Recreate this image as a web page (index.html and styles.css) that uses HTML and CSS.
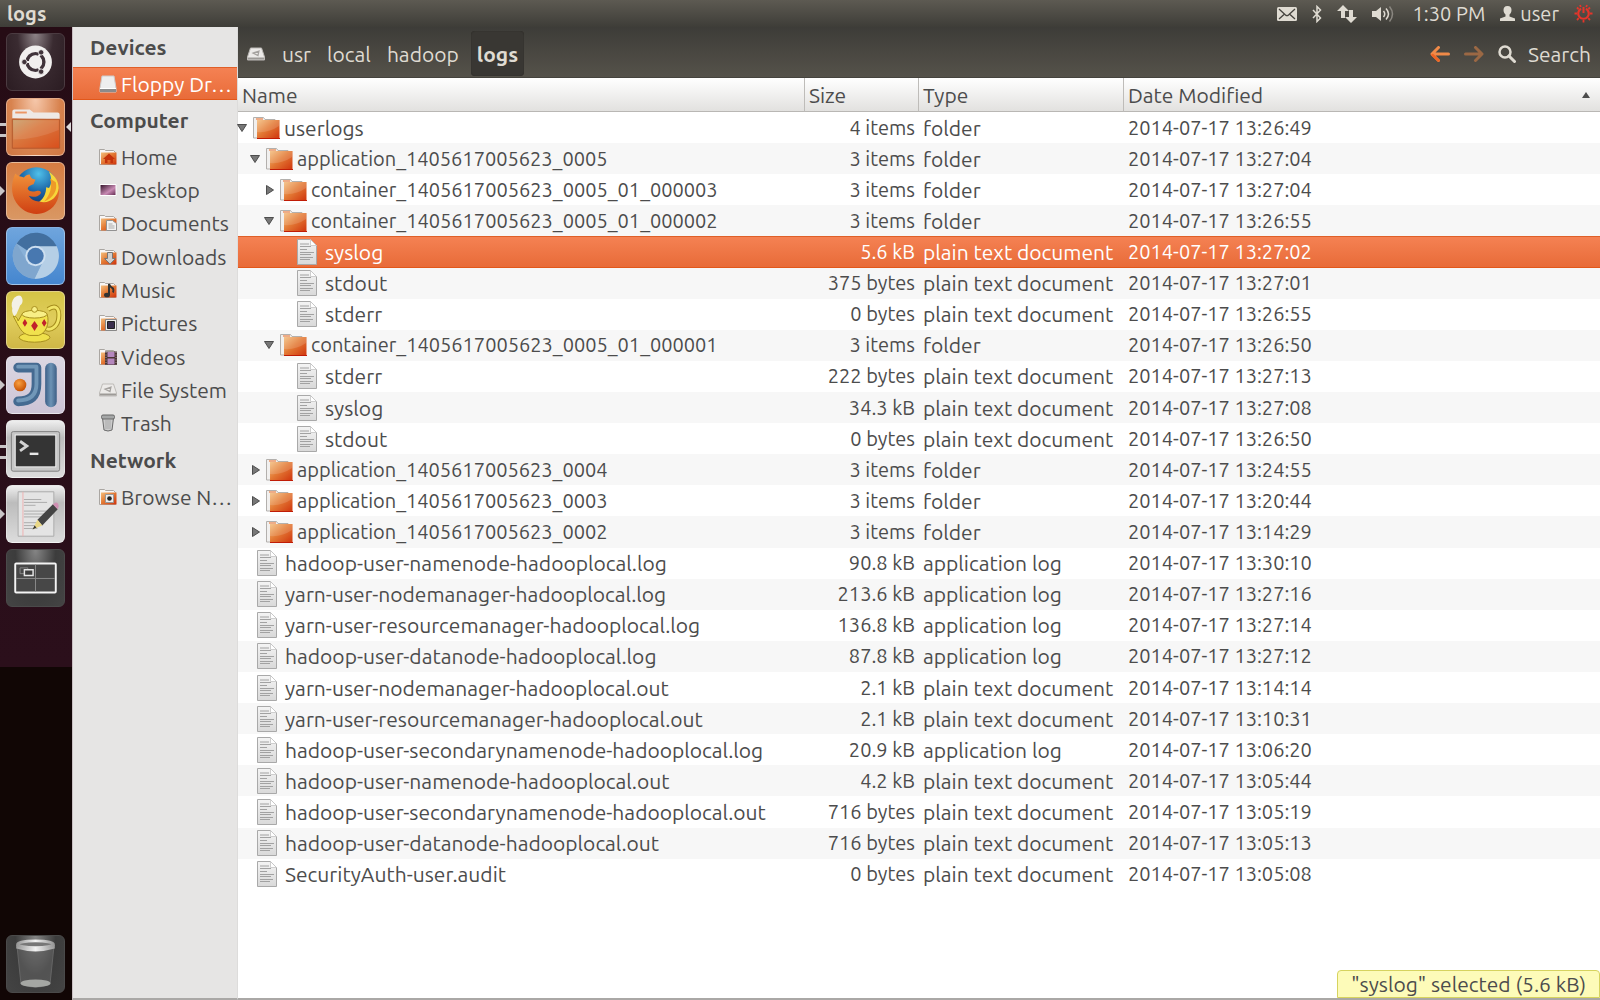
FILE: index.html
```html
<!DOCTYPE html>
<html lang="en">
<head>
<meta charset="utf-8">
<title>logs</title>
<link rel="stylesheet" href="styles.css">
</head>
<body>
<svg class="sprite" aria-hidden="true">
  <defs>
    <linearGradient id="g-folder" x1="0" y1="0" x2="1" y2="1"><stop offset="0" stop-color="#f3bd7c"/><stop offset=".45" stop-color="#e37a35"/><stop offset="1" stop-color="#cf330c"/></linearGradient>
    <linearGradient id="g-paper" x1="0" y1="0" x2="0" y2="1"><stop offset="0" stop-color="#f4f4f4"/><stop offset="1" stop-color="#d9d9d9"/></linearGradient>
    <linearGradient id="g-big" x1="0" y1="0" x2="1" y2="1"><stop offset="0" stop-color="#c9a06c"/><stop offset=".4" stop-color="#d9783f"/><stop offset="1" stop-color="#d94f1c"/></linearGradient>
    <radialGradient id="g-globe" cx=".55" cy=".15" r=".8"><stop offset="0" stop-color="#4fc0ea"/><stop offset=".5" stop-color="#1d67a8"/><stop offset="1" stop-color="#0d2a66"/></radialGradient>
    <linearGradient id="g-fox" x1="0" y1="0" x2="0" y2="1"><stop offset="0" stop-color="#f0913a"/><stop offset="1" stop-color="#cf3f12"/></linearGradient>
    <linearGradient id="g-blue" x1="0" y1="0" x2="1" y2="0"><stop offset="0" stop-color="#3d5f88"/><stop offset=".5" stop-color="#6d93b5"/><stop offset="1" stop-color="#3e5f86"/></linearGradient>
    <radialGradient id="g-ball" cx=".4" cy=".35" r=".7"><stop offset="0" stop-color="#f9a040"/><stop offset="1" stop-color="#c24c00"/></radialGradient>
    <linearGradient id="g-rim" x1="0" y1="0" x2="1" y2="0"><stop offset="0" stop-color="#999"/><stop offset=".5" stop-color="#f2f2f2"/><stop offset="1" stop-color="#999"/></linearGradient>
    <linearGradient id="g-desk" x1="0" y1="0" x2="1" y2="1"><stop offset="0" stop-color="#2c0d22"/><stop offset=".6" stop-color="#c98bb4"/><stop offset="1" stop-color="#5a2348"/></linearGradient>
  </defs>
  <symbol id="folder" viewBox="0 0 27 24">
    <path d="M.5 22V1.500h10l1.500 2h10l1 2V22z" fill="#f1f0ef" stroke="#b3b0ad"/>
    <path d="M3 3h7" stroke="#ec9664" stroke-width="1.500"/>
    <path d="M4 4h22.500v19H4z" fill="url(#g-folder)"/>
    <path d="M4 4h22v6Q16 17 4 16z" fill="#fff" opacity=".14"/>
    <path d="M4 22.500h23" stroke="#c01c06"/>
  </symbol>
  <symbol id="file" viewBox="0 0 20 26">
    <path d="M.5.5h13l6 6v19H.5z" fill="url(#g-paper)" stroke="#a9a9a9"/>
    <path d="M13.500.5v6h6z" fill="#fff" stroke="#c4c4c4" stroke-width=".8"/>
    <path d="M3 5h9M3 7.500h11M3 10.500h7M3 13.500h14M3 15.500h11M3 18.500h13M3 20.500h10" stroke="#a2a2a2"/>
  </symbol>
  <symbol id="down" viewBox="0 0 10 8"><path d="M.5.5h9L5 7.500z" fill="#777" stroke="#4d4d4d"/></symbol>
  <symbol id="right" viewBox="0 0 8 10"><path d="M.5.5v9L7.500 5z" fill="#777" stroke="#4d4d4d"/></symbol>
  <symbol id="mini-folder" viewBox="0 0 18 16">
    <path d="M.5 15.500V.5h5l1 1h8l2 2v12z" fill="#f8f6f5" stroke="#aaa6a2"/>
    <path d="M2 3.500h15.500v12H2z" fill="url(#g-folder)"/>
  </symbol>
  <symbol id="drive" viewBox="0 0 18 14">
    <path d="M3.500 1h11l3 9v3H.5v-3z" fill="#eceae8" stroke="#bdbab7"/>
    <path d="M1 11.500h16" stroke="#9d9a97" stroke-width="2"/>
    <path d="M12 4 6 6l5 2.500zM8 5.500h4" fill="none" stroke="#a5a29f" stroke-width="1.200"/>
  </symbol>
</svg>

<header class="panel">
  <h1 class="panel-title">logs</h1>
  <div class="indicators">
    <button class="plain" aria-label="Messages"><svg width="20" height="14" viewBox="0 0 20 14"><rect width="20" height="14" rx="1.500" fill="#dfdbd2"/><path d="m2 2 6.500 6q1.500 1.300 3 0L18 2M2 12l5-4.500M18 12l-5-4.500" fill="none" stroke="#45433e" stroke-width="1.300"/></svg></button>
    <button class="plain" aria-label="Bluetooth"><svg width="10" height="18" viewBox="0 0 10 18"><path d="m1 5 7.500 8L5 16.500v-15L8.500 5 1 13" fill="none" stroke="#dfdbd2" stroke-width="1.500"/></svg></button>
    <button class="plain" aria-label="Network"><svg width="20" height="18" viewBox="0 0 20 18"><path d="m6 0 6 6H8v7H4V6H0zM14 18l6-6h-4V5h-4v7H8z" fill="#dfdbd2"/></svg></button>
    <button class="plain" aria-label="Volume"><svg width="22" height="18" viewBox="0 0 22 18"><path d="M0 6h4l5-4v14l-5-4H0z" fill="#dfdbd2"/><path d="M11.500 6q2.500 3 0 6M14 3.500q5 5.500 0 11" fill="none" stroke="#dfdbd2" stroke-width="1.500"/><path d="M17.500 1.500q6 7.500 0 15" fill="none" stroke="#8a8780" stroke-width="1.500"/></svg></button>
    <button class="plain clock">1:30 PM</button>
    <button class="plain account"><svg width="15" height="15" viewBox="0 0 15 15"><path d="M7.500 0c3 0 4 2 4 4s-1 3.500-2 4.500v2l5.500 2V15H0v-2.500l5.500-2v-2c-1-1-2-2.500-2-4.500s1-4 4-4z" fill="#dfdbd2"/></svg>user</button>
    <button class="plain" aria-label="Session"><svg width="19" height="19" viewBox="0 0 19 19" fill="none" stroke="#e5352a"><path d="M7 4.800a5.300 5.300 0 1 0 5 0" stroke-width="2.200"/><path d="M9.500 3v6" stroke-width="2"/><path d="m3 3.500 1.500 1.500M16 3.500 14.500 5M.5 9.500H3M16 9.500h2.500M3 16l1.800-1.800M16 16l-1.800-1.800M9.500 16v2.500M6 1l.8 2M13 1l-.8 2" stroke-width="1.800"/></svg></button>
  </div>
</header>

<div class="desktop">
  <nav class="launcher" aria-label="Launcher">
    <div class="apps">
      <button class="app dash" aria-label="Dash"><svg viewBox="0 0 58 58"><circle cx="29" cy="29" r="17" fill="#f1efee"/><circle cx="29" cy="29" r="8.700" fill="none" stroke="#40333a" stroke-width="3.500"/><path d="m29 29-13 0M29 29l6.500-11.300M29 29l6.500 11.300" stroke="#f1efee" stroke-width="2"/><circle cx="29" cy="29" r="6.700" fill="#f1efee"/><g fill="#40333a" stroke="#f1efee" stroke-width=".8"><circle cx="17.500" cy="29" r="2.800"/><circle cx="34.800" cy="19" r="2.800"/><circle cx="34.800" cy="39" r="2.800"/></g></svg></button>
      <button class="app files twice current" aria-label="Files"><svg viewBox="0 0 58 58"><path d="M5 20v-7q0-2 2-2h16l4 3h25q2 0 2 2v5z" fill="#eee9e5"/><path d="M8 14h12" stroke="#ec9664" stroke-width="2"/><path d="M5 21h49v30H5z" fill="url(#g-big)" stroke="#b5582c"/><path d="M6 22h47v10Q30 42 6 42z" fill="#fff" opacity=".1"/></svg></button>
      <button class="app firefox running" aria-label="Firefox"><svg viewBox="0 0 58 58"><circle cx="30" cy="27" r="22.500" fill="url(#g-globe)"/><path d="M8 11c-4 9-5 21 1 30 7 11 21 15 32 9 10-5 14-16 12-27 0-3-1-5-3-7 0 11-4 20-13 23-6 2-12 0-15-5 5 2 9 1 12-2 2-2-1-4-4-3-4 1-7 1-9-2 0-3 3-4 6-5l2-5c-4 0-5-2-6-5-3 0-5 2-6 3-3-1-6-1-9-4z" fill="url(#g-fox)"/><path d="M43 9c3 6 3 12 0 17l-3-1c0 6-2 11-7 15 10 3 19-4 20-14 0-7-4-13-10-17z" fill="#f6d63a"/><path d="M44 16c3 8 0 17-6 24 10-4 14-12 12-20z" fill="#ee9a28"/></svg></button>
      <button class="app chromium" aria-label="Chromium"><svg viewBox="0 0 58 58"><circle cx="29" cy="29" r="23.500" fill="#89b1d8"/><path d="M29 29 9.500 16A23.500 23.500 0 0 1 51 19z" fill="#426f9f"/><path d="M29 19h22a23.500 23.500 0 0 1-23 33.500l9-18z" fill="#b5cfe6"/><path d="M9.500 16A23.500 23.500 0 0 0 28 52.500l8-17-16-1z" fill="#7fa6ce"/><circle cx="29" cy="29" r="10.500" fill="#cddff0"/><circle cx="29" cy="29" r="8.500" fill="#4878b0"/></svg></button>
      <button class="app teapot" aria-label="Teapot"><svg viewBox="0 0 58 58"><ellipse cx="28" cy="47" rx="16" ry="5" fill="#efe04b" stroke="#a58c1c"/><path d="M42 18c9-6 12 0 11 9s-8 13-13 11" fill="none" stroke="#a58c1c" stroke-width="5"/><path d="M42 18c9-6 12 0 11 9s-8 13-13 11" fill="none" stroke="#f1e466" stroke-width="3"/><path d="M6 25q4 0 5 5l4-7q13-6 26 0c3 9-1 20-9 22h-9C14 43 12 36 6 25z" fill="#f1e14d" stroke="#a58c1c"/><ellipse cx="28" cy="23" rx="13" ry="4" fill="#f8ef86" stroke="#a58c1c"/><circle cx="28" cy="18" r="3" fill="#f8ef86" stroke="#a58c1c"/><path d="m18 28 2.500 4-2.500 4-2.500-4zM28 30l3.500 5-3.500 5.500-3.500-5.500zM38 28l2.500 4-2.500 4-2.500-4z" fill="#c1212b"/><path d="M7 25q-3-4-2-8-2-6 2-11 6-5 8 0 2 5-2 8-1 3-2 5-1 4-4 6z" fill="#f3f1e6"/></svg></button>
      <button class="app idea running" aria-label="IntelliJ IDEA"><svg viewBox="0 0 58 58"><path d="M11 11h19v17c0 12-6 18-19 18" fill="none" stroke="#456a91" stroke-width="10" stroke-linecap="round" stroke-linejoin="round"/><path d="M11 10h19v18c0 11-6 17-19 17" fill="none" stroke="#7197b8" stroke-width="4" stroke-linecap="round" stroke-linejoin="round"/><rect x="39" y="6" width="12" height="46" rx="6" fill="url(#g-blue)"/><circle cx="13" cy="29" r="6.500" fill="url(#g-ball)"/></svg></button>
      <button class="app terminal twice" aria-label="Terminal"><svg viewBox="0 0 58 58"><rect x="4" y="11" width="50" height="41" rx="2" fill="#c6c6c6" stroke="#7e7e7e"/><rect x="8" y="14.500" width="42" height="33" fill="#343434" stroke="#f3f3f3"/><path d="m13 21 7 5-7 5" fill="none" stroke="#d3d3d3" stroke-width="3"/><path d="M23 34h9" stroke="#e8e8e8" stroke-width="2.500"/></svg></button>
      <button class="app gedit running" aria-label="Text Editor"><svg viewBox="0 0 58 58"><path d="M11 6h37v46H11z" fill="#e4e4e4" stroke="#aaa"/><path d="M16 6v46" stroke="#efb0b0"/><path d="M17 14h18M17 17h24M17 20h12M17 26h24M17 29h22M17 32h18M17 38h20M17 41h12M17 44h14" stroke="#aaa"/><path d="m31 35 16-16 5 5-16 17z" fill="#444"/><path d="m47 19 3-2q3 0 3 4l-1 3z" fill="#cf8fb2"/><path d="m26 45 5-10 5 6z" fill="#ead885"/><path d="m26 45 2-4 2 2z" fill="#333"/></svg></button>
      <button class="app workspaces" aria-label="Workspace Switcher"><svg viewBox="0 0 58 58"><rect x="8" y="14" width="42" height="30" rx="1" fill="#474747" stroke="#f4f4f4" stroke-width="2"/><path d="M29 15v28M9 29.500h40" stroke="#8a8a8a"/><path d="M13 18.500h8v6h-8z" fill="none" stroke="#888"/><path d="M17.500 20.500h9v6h-9z" fill="#3d3d3d" stroke="#e5e5e5" stroke-width="1.500"/></svg></button>
    </div>
    <button class="app trash" aria-label="Trash"><svg viewBox="0 0 58 58"><path d="m10 12 4 38q15 6 30 0l4-38z" fill="#666" opacity=".55" stroke="#888"/><ellipse cx="29" cy="49" rx="15.500" ry="4" fill="#a5a7a3"/><path d="M9 9h40v4q-20 6-40 0z" fill="url(#g-rim)"/><ellipse cx="29" cy="8.500" rx="18.500" ry="3.500" fill="#777" stroke="url(#g-rim)" stroke-width="3"/></svg></button>
  </nav>

  <aside class="sidebar">
    <h2>Devices</h2>
    <ul class="places">
      <li><a href="#" class="selected"><svg viewBox="0 0 18 18"><path d="M3 1h12l2 12v4H1v-4z" fill="#eee" stroke="#ccc"/><path d="M1 14h16v3H1z" fill="#8b8b8b"/><path d="M1 13.500h16" stroke="#fff"/></svg><span>Floppy Dr…</span></a></li>
    </ul>
    <h2>Computer</h2>
    <ul class="places computer">
      <li><a href="#"><svg viewBox="0 0 18 16"><use href="#mini-folder"/><path d="m4 10 6-5.500L16 10h-2v4h-2.500v-3h-3v3H6v-4z" fill="#c4320c"/></svg><span>Home</span></a></li>
      <li><a href="#"><svg viewBox="0 0 18 16"><path d="M1 2.500h16v11H1z" fill="url(#g-desk)" stroke="#fff"/></svg><span>Desktop</span></a></li>
      <li><a href="#"><svg viewBox="0 0 18 16"><use href="#mini-folder"/><path d="M7.500 5.500h6l4 3v7h-10z" fill="#f2f2f2" stroke="#929292"/><path d="M9.500 9h4M9.500 11h6M9.500 13h6" stroke="#aaa"/></svg><span>Documents</span></a></li>
      <li><a href="#"><svg viewBox="0 0 18 16"><use href="#mini-folder"/><path d="M8.500 3.500h5v6h3L11 15 5.500 9.500h3z" fill="#cfcfcf" stroke="#777"/></svg><span>Downloads</span></a></li>
      <li><a href="#"><svg viewBox="0 0 18 16"><use href="#mini-folder"/><path d="M10 13V2q1 3 4 4.500 1 2 0 4" fill="none" stroke="#333" stroke-width="2"/><ellipse cx="8" cy="13" rx="3" ry="2.300" fill="#333"/></svg><span>Music</span></a></li>
      <li><a href="#"><svg viewBox="0 0 18 16"><use href="#mini-folder"/><path d="M6.500 4.500h11v11h-11z" fill="#eee" stroke="#888"/><path d="M8.500 6.500h7v7h-7z" fill="#3b2f4e" stroke="#222"/></svg><span>Pictures</span></a></li>
      <li><a href="#"><svg viewBox="0 0 18 16"><use href="#mini-folder"/><path d="M6 2.500h12V16H6z" fill="#4a3434"/><path d="M8.500 3h7v5h-7zM8.500 9.500h7v6h-7z" fill="#b487bd"/><path d="M7 3v13M17 3v13" stroke="#a99" stroke-dasharray="1 1.500"/></svg><span>Videos</span></a></li>
      <li><a href="#"><svg viewBox="0 0 18 14"><use href="#drive"/></svg><span>File System</span></a></li>
      <li><a href="#"><svg viewBox="0 0 18 18"><path d="m3.500 4 1.500 12q4 2 8 0l1.500-12z" fill="#ccc" stroke="#6a6a6a"/><path d="M7 6v9M9 6v9M11 6v9" stroke="#aaa"/><rect x="2.500" y="1" width="13" height="4" rx="1.500" fill="#a5a7a7" stroke="#666"/></svg><span>Trash</span></a></li>
    </ul>
    <h2>Network</h2>
    <ul class="places">
      <li><a href="#"><svg viewBox="0 0 18 16"><use href="#mini-folder"/><path d="M6.500 5.500h8v8h-8z" fill="#eee" stroke="#999"/><circle cx="10.500" cy="9.500" r="2.300" fill="#222"/></svg><span>Browse N…</span></a></li>
    </ul>
  </aside>

  <main class="window">
    <div class="toolbar">
      <nav class="path" aria-label="Path">
        <button class="plain crumb root" aria-label="File System"><svg width="18" height="14" viewBox="0 0 18 14"><use href="#drive"/></svg></button>
        <button class="plain crumb">usr</button>
        <button class="plain crumb">local</button>
        <button class="plain crumb">hadoop</button>
        <button class="plain crumb active">logs</button>
      </nav>
      <div class="tools">
        <button class="plain" aria-label="Back"><svg width="20" height="16" viewBox="0 0 20 16"><path d="M18.500 8H3M8.500 1.500 2 8l6.500 6.500" fill="none" stroke="#f08a48" stroke-width="3" stroke-linecap="round" stroke-linejoin="round"/><path d="m2.500 9 6 5.500" stroke="#ee6424" stroke-width="2.500" stroke-linecap="round"/></svg></button>
        <button class="plain" aria-label="Forward"><svg width="20" height="16" viewBox="0 0 20 16"><path d="M1.500 8H17M11.500 1.500 18 8l-6.500 6.500" fill="none" stroke="#9b6844" stroke-width="3" stroke-linecap="round" stroke-linejoin="round"/></svg></button>
        <button class="plain search"><svg width="18" height="18" viewBox="0 0 18 18"><circle cx="7" cy="7" r="5.500" fill="none" stroke="#dfdbd2" stroke-width="2.500"/><path d="m11 11 5.500 5.500" stroke="#dfdbd2" stroke-width="3" stroke-linecap="round"/></svg>Search</button>
      </div>
    </div>

    <div class="listing">
      <table>
        <colgroup><col class="c-name"><col class="c-size"><col class="c-type"><col></colgroup>
        <thead>
          <tr><th>Name</th><th>Size</th><th>Type</th><th><div class="sorted">Date Modified<svg width="8" height="6" viewBox="0 0 8 6"><path d="M0 6h8L4 0z" fill="#4c4c4c"/></svg></div></th></tr>
        </thead>
        <tbody>
          <tr><td><div class="entry"><button class="plain toggle" aria-label="Collapse"><svg class="down"><use href="#down"/></svg></button><svg class="folder"><use href="#folder"/></svg>userlogs</div></td><td>4 items</td><td>folder</td><td>2014-07-17 13:26:49</td></tr>
          <tr><td><div class="entry numbered depth-1"><button class="plain toggle" aria-label="Collapse"><svg class="down"><use href="#down"/></svg></button><svg class="folder"><use href="#folder"/></svg>application_1405617005623_0005</div></td><td>3 items</td><td>folder</td><td>2014-07-17 13:27:04</td></tr>
          <tr><td><div class="entry numbered depth-2"><button class="plain toggle" aria-label="Expand"><svg class="right"><use href="#right"/></svg></button><svg class="folder"><use href="#folder"/></svg>container_1405617005623_0005_01_000003</div></td><td>3 items</td><td>folder</td><td>2014-07-17 13:27:04</td></tr>
          <tr><td><div class="entry numbered depth-2"><button class="plain toggle" aria-label="Collapse"><svg class="down"><use href="#down"/></svg></button><svg class="folder"><use href="#folder"/></svg>container_1405617005623_0005_01_000002</div></td><td>3 items</td><td>folder</td><td>2014-07-17 13:26:55</td></tr>
          <tr class="selected"><td><div class="entry leaf depth-3"><svg class="file"><use href="#file"/></svg>syslog</div></td><td>5.6 kB</td><td>plain text document</td><td>2014-07-17 13:27:02</td></tr>
          <tr><td><div class="entry leaf depth-3"><svg class="file"><use href="#file"/></svg>stdout</div></td><td>375 bytes</td><td>plain text document</td><td>2014-07-17 13:27:01</td></tr>
          <tr><td><div class="entry leaf depth-3"><svg class="file"><use href="#file"/></svg>stderr</div></td><td>0 bytes</td><td>plain text document</td><td>2014-07-17 13:26:55</td></tr>
          <tr><td><div class="entry numbered depth-2"><button class="plain toggle" aria-label="Collapse"><svg class="down"><use href="#down"/></svg></button><svg class="folder"><use href="#folder"/></svg>container_1405617005623_0005_01_000001</div></td><td>3 items</td><td>folder</td><td>2014-07-17 13:26:50</td></tr>
          <tr><td><div class="entry leaf depth-3"><svg class="file"><use href="#file"/></svg>stderr</div></td><td>222 bytes</td><td>plain text document</td><td>2014-07-17 13:27:13</td></tr>
          <tr><td><div class="entry leaf depth-3"><svg class="file"><use href="#file"/></svg>syslog</div></td><td>34.3 kB</td><td>plain text document</td><td>2014-07-17 13:27:08</td></tr>
          <tr><td><div class="entry leaf depth-3"><svg class="file"><use href="#file"/></svg>stdout</div></td><td>0 bytes</td><td>plain text document</td><td>2014-07-17 13:26:50</td></tr>
          <tr><td><div class="entry numbered depth-1"><button class="plain toggle" aria-label="Expand"><svg class="right"><use href="#right"/></svg></button><svg class="folder"><use href="#folder"/></svg>application_1405617005623_0004</div></td><td>3 items</td><td>folder</td><td>2014-07-17 13:24:55</td></tr>
          <tr><td><div class="entry numbered depth-1"><button class="plain toggle" aria-label="Expand"><svg class="right"><use href="#right"/></svg></button><svg class="folder"><use href="#folder"/></svg>application_1405617005623_0003</div></td><td>3 items</td><td>folder</td><td>2014-07-17 13:20:44</td></tr>
          <tr><td><div class="entry numbered depth-1"><button class="plain toggle" aria-label="Expand"><svg class="right"><use href="#right"/></svg></button><svg class="folder"><use href="#folder"/></svg>application_1405617005623_0002</div></td><td>3 items</td><td>folder</td><td>2014-07-17 13:14:29</td></tr>
          <tr><td><div class="entry leaf"><svg class="file"><use href="#file"/></svg>hadoop-user-namenode-hadooplocal.log</div></td><td>90.8 kB</td><td>application log</td><td>2014-07-17 13:30:10</td></tr>
          <tr><td><div class="entry leaf"><svg class="file"><use href="#file"/></svg>yarn-user-nodemanager-hadooplocal.log</div></td><td>213.6 kB</td><td>application log</td><td>2014-07-17 13:27:16</td></tr>
          <tr><td><div class="entry leaf"><svg class="file"><use href="#file"/></svg>yarn-user-resourcemanager-hadooplocal.log</div></td><td>136.8 kB</td><td>application log</td><td>2014-07-17 13:27:14</td></tr>
          <tr><td><div class="entry leaf"><svg class="file"><use href="#file"/></svg>hadoop-user-datanode-hadooplocal.log</div></td><td>87.8 kB</td><td>application log</td><td>2014-07-17 13:27:12</td></tr>
          <tr><td><div class="entry leaf"><svg class="file"><use href="#file"/></svg>yarn-user-nodemanager-hadooplocal.out</div></td><td>2.1 kB</td><td>plain text document</td><td>2014-07-17 13:14:14</td></tr>
          <tr><td><div class="entry leaf"><svg class="file"><use href="#file"/></svg>yarn-user-resourcemanager-hadooplocal.out</div></td><td>2.1 kB</td><td>plain text document</td><td>2014-07-17 13:10:31</td></tr>
          <tr><td><div class="entry leaf"><svg class="file"><use href="#file"/></svg>hadoop-user-secondarynamenode-hadooplocal.log</div></td><td>20.9 kB</td><td>application log</td><td>2014-07-17 13:06:20</td></tr>
          <tr><td><div class="entry leaf"><svg class="file"><use href="#file"/></svg>hadoop-user-namenode-hadooplocal.out</div></td><td>4.2 kB</td><td>plain text document</td><td>2014-07-17 13:05:44</td></tr>
          <tr><td><div class="entry leaf"><svg class="file"><use href="#file"/></svg>hadoop-user-secondarynamenode-hadooplocal.out</div></td><td>716 bytes</td><td>plain text document</td><td>2014-07-17 13:05:19</td></tr>
          <tr><td><div class="entry leaf"><svg class="file"><use href="#file"/></svg>hadoop-user-datanode-hadooplocal.out</div></td><td>716 bytes</td><td>plain text document</td><td>2014-07-17 13:05:13</td></tr>
          <tr><td><div class="entry leaf"><svg class="file"><use href="#file"/></svg>SecurityAuth-user.audit</div></td><td>0 bytes</td><td>plain text document</td><td>2014-07-17 13:05:08</td></tr>
        </tbody>
      </table>
      <div class="status" role="status">"syslog" selected (5.6 kB)</div>
    </div>
  </main>
</div>
</body>
</html>
```

FILE: styles.css
```css
* { box-sizing: border-box; }

body {
  margin: 0;
  min-height: 100vh;
  display: flex;
  flex-direction: column;
  font: 21px/24px Ubuntu, "Noto Sans", sans-serif;
  color: #4c4c4c;
  background: #fff;
}

.sprite { position: absolute; width: 0; height: 0; }

svg { display: block; flex: none; }

.plain {
  padding: 0;
  border: 0;
  background: none;
  font: inherit;
  color: inherit;
}

/* Top panel */
.panel {
  height: 27px;
  padding: 0 7px;
  display: flex;
  align-items: center;
  justify-content: space-between;
  color: #dfdbd2;
  background: linear-gradient(#5d5a52, #3e3d38);
}

.panel-title { margin: 0; font-size: 20px; line-height: 24px; }

.indicators { display: flex; align-items: center; gap: 15px; font-size: 20px; }
.indicators .clock { margin-left: 4px; }
.account { display: flex; align-items: center; gap: 5px; }

.desktop { flex: 1; display: flex; }

/* Launcher */
.launcher {
  width: 72px;
  padding: 6px 7px 7px 6px;
  display: flex;
  flex-direction: column;
  justify-content: space-between;
  background: linear-gradient(#260c15 0, #2b0f1b 640px, #110605 640px);
}

.apps {
  height: 574px;
  display: flex;
  flex-direction: column;
  justify-content: space-between;
}

.app {
  position: relative;
  width: 59px;
  height: 58px;
  padding: 0;
  border: 1px solid rgba(255, 255, 255, .35);
  border-radius: 6px;
}

.app svg { width: 100%; height: 100%; }

.dash { border-color: #4b3b41; background: radial-gradient(at 50% 0, #8d8286, #3a2b31 45%, #2b1c22); }
.files { background: radial-gradient(at 50% 0, #f6c8ab, #d8834f 60%, #cf7743); }
.firefox { background: linear-gradient(#d67c42, #d99763); }
.chromium { background: linear-gradient(#6fa5dd, #4586cf); }
.teapot { background: linear-gradient(#d5c446, #e0cd5c 50%, #cfb746); }
.idea { background: linear-gradient(#dcd7e2, #cdc4d6); }
.terminal, .gedit { background: linear-gradient(#eee, #bcbcbc 30%, #dcdcdc); }
.workspaces, .trash { border-color: #4a4a4a; background: radial-gradient(at 50% 0, #858585, #3c3c3c 50%, #444); }

.running::before, .twice::before {
  content: "";
  position: absolute;
  left: -7px;
  top: 23px;
  border: 5px solid transparent;
  border-left-color: #c9c5c7;
  border-right: 0;
}

.twice::before {
  top: 24px;
  width: 6px;
  height: 8px;
  border: solid #c9c5c7;
  border-width: 3px 0;
}

.current::after {
  content: "";
  position: absolute;
  right: -7px;
  top: 23px;
  border: 5px solid transparent;
  border-right-color: #dcd9da;
  border-left: 0;
}

/* Places sidebar */
.sidebar {
  width: 166px;
  background: #e6e5e4;
  border-left: 1px solid #c9c0c3;
  border-right: 1px solid #dddcdb;
  border-bottom: 2px solid #aaa8a6;
}

.sidebar h2 {
  margin: 0;
  padding: 0 17px;
  font-size: 21px;
  line-height: 40px;
}

.places {
  margin: 0;
  padding: 0;
  list-style: none;
  display: grid;
  grid-template-columns: minmax(0, 1fr);
  grid-auto-rows: minmax(33px, 1fr);
}

.computer { min-height: 300px; }

.places a {
  height: 100%;
  padding: 0 4px 0 26px;
  display: flex;
  align-items: center;
  gap: 4px;
  color: inherit;
  text-decoration: none;
}

.places svg { width: 18px; height: 18px; }
.places span { white-space: nowrap; }

.selected {
  color: #fff;
  background: linear-gradient(#f58254, #e86b38);
  box-shadow: inset 0 1px #df5f28, inset 0 -1px #e2571a;
}

.places .selected { color: #fff; }

/* File manager window */
.window { flex: 1; min-width: 0; display: flex; flex-direction: column; }

.toolbar {
  height: 51px;
  padding: 4px 9px 1px;
  display: flex;
  justify-content: space-between;
  color: #dfdbd2;
  background: linear-gradient(#3d3c38, #55524a);
  border-bottom: 1px solid #45433d;
}

.path, .tools { display: flex; align-items: center; }
.crumb { height: 45px; padding: 0 8px; }
.crumb.root { padding: 0 9px 0 0; }
.crumb.active {
  margin-left: 4px;
  padding: 0 6px;
  font-weight: bold;
  background: #393733;
  border-radius: 4px;
  box-shadow: inset 0 0 1px #1f1e1b;
}

.tools { gap: 14px; }
.search { display: flex; align-items: center; gap: 12px; }

.listing {
  position: relative;
  flex: 1;
  border-bottom: 2px solid #aaa8a6;
}

table {
  width: 100%;
  height: 812px;
  table-layout: fixed;
  border-collapse: separate;
  border-spacing: 0;
}

.c-name { width: 567px; }
.c-size { width: 114px; }
.c-type { width: 205px; }

th {
  height: 34px;
  padding: 0 4px;
  font-weight: normal;
  text-align: left;
  background: linear-gradient(#fff, #e2e1df);
  border-right: 1px solid #bebcb9;
  border-bottom: 1px solid #b9b7b4;
}

th:last-child { border-right: 0; }

.sorted { display: flex; align-items: center; justify-content: space-between; padding-right: 6px; }

td { height: 31px; padding: 0 4px; white-space: nowrap; }
td:first-child { padding-left: 0; }
td:nth-child(2) { text-align: right; }
td:nth-child(even), .numbered { font-size: 20px; }
tbody tr:nth-child(even) { background: #f7f7f7; }
tbody tr.selected { background: linear-gradient(#f58254, #e86b38); }

.entry { display: flex; align-items: center; }
.depth-1 { padding-left: 13px; }
.depth-2 { padding-left: 27px; }
.depth-3 { padding-left: 40px; }

.toggle { width: 16px; margin-left: -1px; display: flex; }
.down { width: 10px; height: 8px; }
.right { width: 8px; height: 10px; margin-left: 2px; }
.folder { width: 27px; height: 24px; margin-right: 4px; }
.file { width: 20px; height: 26px; margin-right: 8px; }
.leaf::before { content: ""; width: 19px; }

.status {
  position: absolute;
  right: 0;
  bottom: 0;
  padding: 1px 13px;
  background: #fdfbb9;
  border: 1px solid #d6d35f;
  border-radius: 4px 4px 0 0;
}
```
